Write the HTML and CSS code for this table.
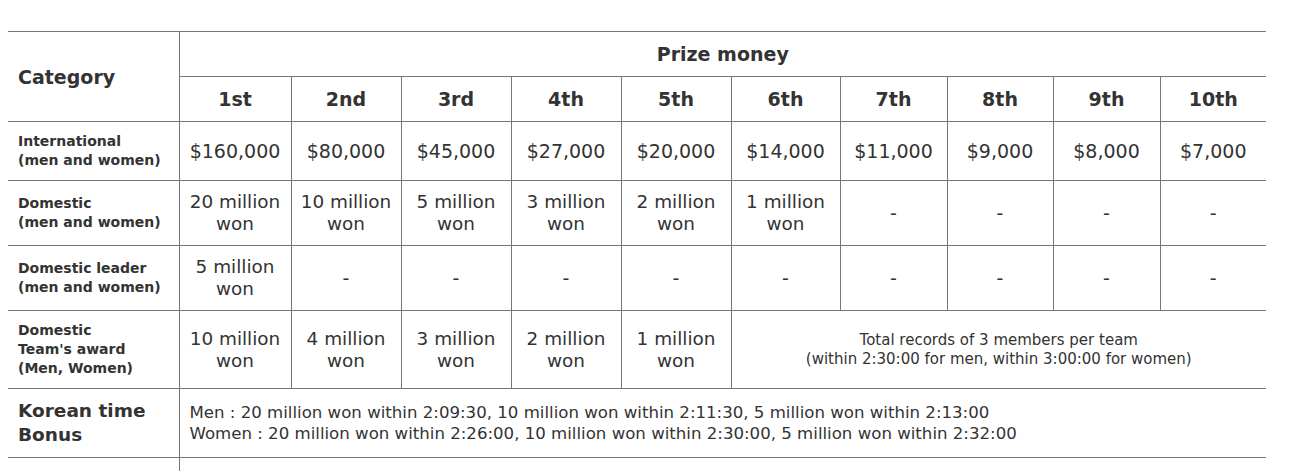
FILE: index.html
```html
<!DOCTYPE html>
<html lang="en">
<head>
<meta charset="utf-8">
<title>Prize money</title>
<link rel="stylesheet" href="styles.css">
</head>
<body>
<table class="prize">
  <colgroup>
    <col class="c-cat">
    <col class="c1"><col class="c2"><col class="c3"><col class="c4"><col class="c5">
    <col class="c6"><col class="c7"><col class="c8"><col class="c9"><col class="c10">
  </colgroup>
  <thead>
    <tr class="r-head1">
      <th rowspan="2" class="cat-head">Category</th>
      <th colspan="10" class="prize-head">Prize money</th>
    </tr>
    <tr class="r-head2">
      <th>1st</th><th>2nd</th><th>3rd</th><th>4th</th><th>5th</th>
      <th>6th</th><th>7th</th><th>8th</th><th>9th</th><th>10th</th>
    </tr>
  </thead>
  <tbody>
    <tr class="r-intl">
      <th class="label">International<br>(men and women)</th>
      <td>$160,000</td><td>$80,000</td><td>$45,000</td><td>$27,000</td><td>$20,000</td>
      <td>$14,000</td><td>$11,000</td><td>$9,000</td><td>$8,000</td><td>$7,000</td>
    </tr>
    <tr class="r-dom">
      <th class="label">Domestic<br>(men and women)</th>
      <td class="won">20 million<br>won</td><td class="won">10 million<br>won</td><td class="won">5 million<br>won</td><td class="won">3 million<br>won</td><td class="won">2 million<br>won</td>
      <td class="won">1 million<br>won</td><td>-</td><td>-</td><td>-</td><td>-</td>
    </tr>
    <tr class="r-lead">
      <th class="label">Domestic leader<br>(men and women)</th>
      <td class="won">5 million<br>won</td><td>-</td><td>-</td><td>-</td><td>-</td>
      <td>-</td><td>-</td><td>-</td><td>-</td><td>-</td>
    </tr>
    <tr class="r-team">
      <th class="label">Domestic<br>Team's award<br>(Men, Women)</th>
      <td class="won">10 million<br>won</td><td class="won">4 million<br>won</td><td class="won">3 million<br>won</td><td class="won">2 million<br>won</td><td class="won">1 million<br>won</td>
      <td colspan="5" class="note">Total records of 3 members per team<br>(within 2:30:00 for men, within 3:00:00 for women)</td>
    </tr>
    <tr class="r-bonus">
      <th class="label big">Korean time<br>Bonus</th>
      <td colspan="10" class="bonus">Men : 20 million won within 2:09:30, 10 million won within 2:11:30, 5 million won within 2:13:00<br>Women : 20 million won within 2:26:00, 10 million won within 2:30:00, 5 million won within 2:32:00</td>
    </tr>
    <tr class="r-next">
      <th class="label"></th>
      <td colspan="10"></td>
    </tr>
  </tbody>
</table>
</body>
</html>
```

FILE: styles.css
```css
html, body {
  margin: 0;
  padding: 0;
  background: #ffffff;
}

body {
  font-family: "DejaVu Sans", sans-serif;
  color: #333333;
}

.prize {
  border-collapse: collapse;
  table-layout: fixed;
  width: 1258px;
  margin: 31px 0 0 8px;
}

.c-cat { width: 171px; }
.c1 { width: 112px; }
.c2, .c3, .c4, .c5 { width: 110px; }
.c6 { width: 109px; }
.c7 { width: 107px; }
.c8 { width: 106px; }
.c9 { width: 107px; }
.c10 { width: 106px; }

.prize th,
.prize td {
  border: 1px solid #777777;
  padding: 0;
  text-align: center;
  vertical-align: middle;
}

.prize tr > :first-child { border-left: none; }
.prize tr > :last-child { border-right: none; }
.prize .prize-head { border-right: none; }

.prize th {
  font-weight: bold;
  font-size: 19px;
}

.prize td {
  font-size: 19px;
  line-height: 22px;
}

.prize td.won {
  font-size: 18.4px;
}

.prize .cat-head,
.prize .label {
  text-align: left;
  padding-left: 10px;
}

.prize .label {
  font-size: 14px;
  line-height: 19px;
}

.prize .label.big {
  font-size: 18.5px;
  line-height: 24px;
}

.r-head1 { height: 45px; }
.r-head2 { height: 45px; }
.r-intl { height: 59px; }
.r-dom { height: 65px; }
.r-lead { height: 65px; }
.r-team { height: 78px; }
.r-bonus { height: 69px; }
.r-next { height: 30px; }

.prize .note {
  font-size: 15px;
  line-height: 19px;
}

.prize .bonus {
  text-align: left;
  padding-left: 10px;
  font-size: 16.6px;
  line-height: 21px;
}

.prize .r-next th,
.prize .r-next td {
  border-bottom: none;
}
```
